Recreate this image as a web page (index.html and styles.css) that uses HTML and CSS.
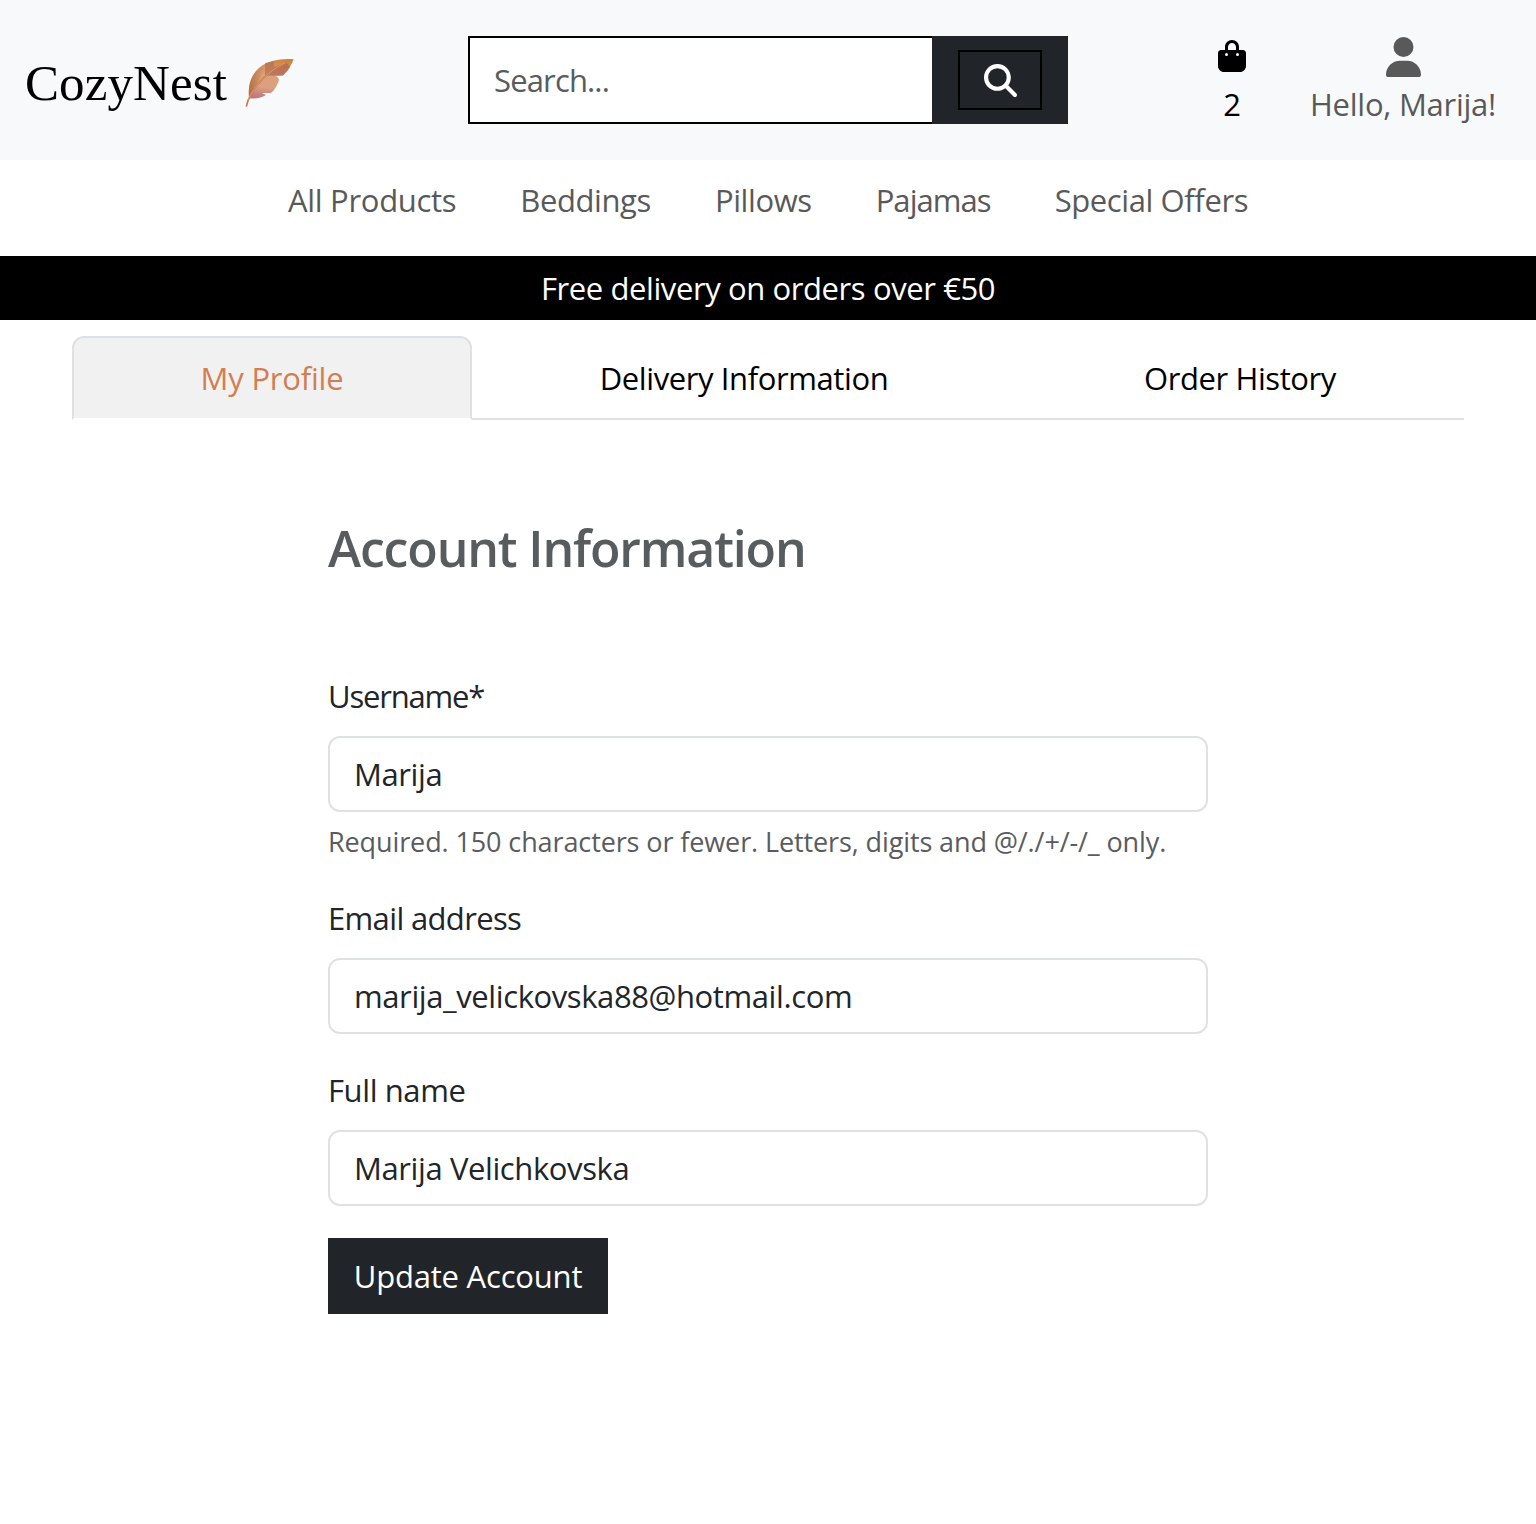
FILE: index.html
```html
<!DOCTYPE html>
<html lang="en">
<head>
<meta charset="utf-8">
<title>CozyNest - My Profile</title>
<link rel="stylesheet" href="styles.css">
</head>
<body>
<header class="header">
  <a class="brand" href="#">
    <span class="brand-name">CozyNest</span>
    <svg class="feather" viewBox="0 0 50 50" aria-hidden="true">
      <defs>
        <linearGradient id="vane" x1="0.7" y1="0" x2="0.5" y2="1">
          <stop offset="0" stop-color="#cc843f"/>
          <stop offset="0.45" stop-color="#dda077"/>
          <stop offset="0.75" stop-color="#d9a083"/>
          <stop offset="1" stop-color="#c5787c"/>
        </linearGradient>
        <linearGradient id="edge" x1="0" y1="0" x2="1" y2="0">
          <stop offset="0" stop-color="#b5723f"/>
          <stop offset="1" stop-color="#b5723f" stop-opacity="0"/>
        </linearGradient>
      </defs>
      <path fill="url(#vane)" d="M4 39C3 27 6 18 13 11C22 2 34 1 48.500 1C47 7 42 13 38 17.500L31 18C33 19 34 21 34 22C32 28 29 33 26 35L17 35L21 37C16 40 10 41 4 40.500Z"/>
      <path fill="url(#edge)" d="M4 39C3 27 6 18 13 11C15 9 17 7 20 6C19 14 13 25 4 39Z"/>
      <path fill="#af695a" d="M20 5L29 3V12L20 18Z" opacity=".6"/>
      <path fill="#a95d50" d="M29 9L42 5L45 9C43 13 40 16 38 17.500H20L29 11Z" opacity=".6"/>
      <path fill="none" stroke="#c97848" stroke-width="1.600" stroke-linecap="round" d="M1.500 48C4 36 16 16 41 5"/>
      <path fill="none" stroke="#e0a071" stroke-width=".8" d="M3 42C8 31 19 15 40 5"/>
    </svg>
  </a>
  <form class="search">
    <input class="search-input" type="text" placeholder="Search...">
    <span class="search-addon">
      <button class="search-button" type="button" aria-label="Search">
        <svg width="33" height="33" viewBox="0 0 512 512"><path fill="#fff" d="M416 208c0 45.900-14.900 88.300-40 122.700L502.600 457.400c12.500 12.500 12.500 32.800 0 45.300s-32.800 12.500-45.300 0L330.700 376c-34.400 25.200-76.800 40-122.700 40C93.100 416 0 322.900 0 208S93.100 0 208 0S416 93.100 416 208zM208 352a144 144 0 1 0 0-288 144 144 0 1 0 0 288z"/></svg>
      </button>
    </span>
  </form>
  <div class="actions">
    <a class="action cart" href="#">
      <svg width="28" height="32" viewBox="0 0 448 512"><path fill="currentColor" d="M160 112c0-35.300 28.700-64 64-64s64 28.700 64 64v48H160V112zm-48 48H48c-26.500 0-48 21.500-48 48V416c0 53 43 96 96 96H352c53 0 96-43 96-96V208c0-26.500-21.500-48-48-48H336V112C336 50.100 285.900 0 224 0S112 50.100 112 112v48zm24 48a24 24 0 1 1 0 48 24 24 0 1 1 0-48zm152 24a24 24 0 1 1 48 0 24 24 0 1 1 -48 0z"/></svg>
      <span>2</span>
    </a>
    <a class="action user" href="#">
      <svg width="35" height="40" viewBox="0 0 448 512"><path fill="currentColor" d="M224 256A128 128 0 1 0 224 0a128 128 0 1 0 0 256zm-45.700 48C79.800 304 0 383.800 0 482.300C0 498.700 13.300 512 29.700 512H418.300c16.400 0 29.700-13.300 29.700-29.700C448 383.800 368.200 304 269.700 304H178.300z"/></svg>
      <span>Hello, Marija!</span>
    </a>
  </div>
</header>
<nav class="nav">
  <a class="nav-products" href="#">All Products</a>
  <a href="#">Beddings</a>
  <a href="#">Pillows</a>
  <a class="nav-pajamas" href="#">Pajamas</a>
  <a href="#">Special Offers</a>
</nav>
<div class="banner">Free delivery on orders over €50</div>
<main>
  <div class="tabs">
    <a class="tab tab-profile active" href="#">My Profile</a>
    <a class="tab tab-delivery" href="#">Delivery Information</a>
    <a class="tab tab-orders" href="#">Order History</a>
  </div>
  <section class="account">
    <h1 class="title">Account Information</h1>
    <form class="form">
      <div class="field">
        <label class="label-username" for="username">Username*</label>
        <input id="username" type="text" value="Marija">
        <div class="help">Required. 150 characters or fewer. Letters, digits and @/./+/-/_ only.</div>
      </div>
      <div class="field">
        <label class="label-email" for="email">Email address</label>
        <input id="email" type="text" value="marija_velickovska88@hotmail.com">
      </div>
      <div class="field">
        <label for="fullname">Full name</label>
        <input id="fullname" type="text" value="Marija Velichkovska">
      </div>
      <button class="submit" type="button">Update Account</button>
    </form>
  </section>
</main>
</body>
</html>
```
FILE: styles.css
```css
* { box-sizing: border-box; }
body {
  margin: 0;
  min-height: 1524px;
  background: #fff;
  color: #212529;
  font-family: "Open Sans", "Noto Sans", sans-serif;
  font-size: 31px;
  line-height: 48px;
  letter-spacing: -0.4px;
}
a { color: inherit; text-decoration: none; }
input, button { font: inherit; letter-spacing: inherit; color: inherit; margin: 0; }
svg { display: block; flex: none; }

.header {
  height: 160px;
  background: #f8f9fb;
  display: grid;
  grid-template-columns: 468px 600px 1fr;
  align-items: center;
}
.brand { display: flex; align-items: center; gap: 18px; padding: 5px 0 0 25px; color: #000; }
.brand-name {
  width: 202px;
  font-family: "Liberation Serif", serif;
  font-size: 51px;
  line-height: 64px;
  letter-spacing: 0.1px;
  white-space: nowrap;
}
.feather { width: 50px; height: 50px; }
.search { display: flex; height: 88px; }
.search-input {
  width: 464px;
  border: 2px solid #000;
  border-right: 0;
  border-radius: 0;
  padding: 0 24px;
  background: #fff;
  letter-spacing: -0.85px;
}
.search-input::placeholder { color: #595c5f; opacity: 1; }
.search-addon {
  width: 136px;
  background: #212529;
  display: flex;
  align-items: center;
  justify-content: center;
}
.search-button {
  width: 84px;
  height: 60px;
  border: 2px solid #000;
  background: none;
  padding: 0;
  display: flex;
  align-items: center;
  justify-content: center;
}
.actions { display: flex; justify-content: flex-end; gap: 64px; padding-right: 40px; }
.action { display: flex; flex-direction: column; align-items: center; white-space: nowrap; }
.cart { color: #000; padding-top: 8px; gap: 8px; }
.user { color: #595959; padding-top: 5px; gap: 3px; letter-spacing: -0.25px; }

.nav { height: 96px; padding-top: 16px; display: flex; justify-content: center; gap: 64px; color: #595959; }
.nav-products { letter-spacing: -0.3px; }
.nav-pajamas { letter-spacing: -0.95px; }
.banner { height: 64px; padding-top: 8px; background: #000; color: #fff; text-align: center; }

.tabs { display: flex; margin: 16px 72px 0; height: 84px; border-bottom: 2px solid #dee2e6; color: #000; }
.tab { height: 84px; padding-top: 18px; text-align: center; }
.tab-profile { width: 400px; letter-spacing: -0.2px; }
.tab-delivery { width: 544px; }
.tab-orders { width: 448px; }
.tab.active {
  padding-top: 16px;
  border: 2px solid #dee2e6;
  border-bottom-color: #fff;
  border-radius: 12px 12px 0 0;
  background: #f1f1f1;
  color: #d17f52;
}

.account { width: 880px; margin: 96px auto 0; }
.title { margin: 0 0 92px; font-size: 50px; line-height: 64px; font-weight: 600; color: #595c5f; letter-spacing: -1.15px; }
.form { display: flex; flex-direction: column; gap: 32px; align-items: flex-start; }
.field { width: 100%; }
.field label { display: block; margin-bottom: 16px; }
.field .label-username { letter-spacing: -1.2px; }
.field .label-email { letter-spacing: -0.65px; }
.field input {
  display: block;
  width: 100%;
  height: 76px;
  padding: 0 24px;
  border: 2px solid #dee2e6;
  border-radius: 12px;
  background: #fff;
}
.help { padding-top: 9px; height: 50px; font-size: 27px; line-height: 42px; letter-spacing: -0.11px; color: #595c5f; white-space: nowrap; }
.submit { width: 280px; height: 76px; padding: 0; border: 0; background: #212529; color: #fff; white-space: nowrap; letter-spacing: -0.2px; }
```
